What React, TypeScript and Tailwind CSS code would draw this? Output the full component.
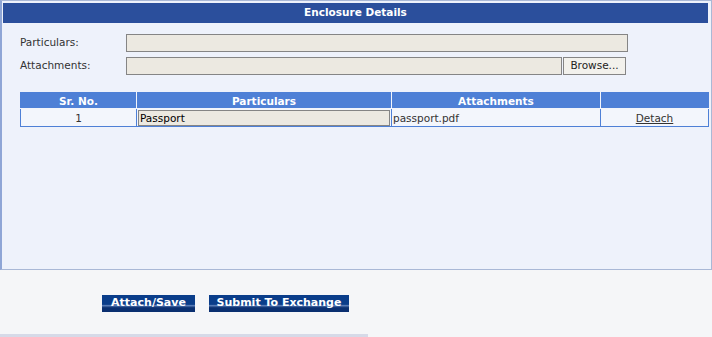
export default function App() {
  const font = { fontFamily: '"DejaVu Sans", Verdana, sans-serif' };
  return (
    <div className="w-[712px] h-[337px] bg-[#f5f6f8] relative overflow-hidden text-[#333]" style={font}>
      <div className="h-[270px] border border-[#a9b8d6] border-l-2 border-l-[#8fa6d6] bg-[#eef2fb] pt-[2px] pl-[1px] pr-[3px]">
        <div className="h-[20px] bg-[#2b4f9c] flex items-center justify-center text-white font-bold text-[10.5px]">
          Enclosure Details
        </div>
        <div className="pl-[17px] pt-[11px]">
          <div className="flex items-center h-[18px]">
            <div className="w-[106px] text-[10.5px]">Particulars:</div>
            <div className="w-[502px] h-[18px] bg-[#ece9e1] border border-[#858585]" />
          </div>
          <div className="flex items-center h-[18px] mt-[5px]">
            <div className="w-[106px] text-[10.5px]">Attachments:</div>
            <div className="w-[436px] h-[18px] bg-[#ece9e1] border border-[#858585]" />
            <div className="ml-[1px] w-[63px] h-[18px] bg-[#f2f1ec] border border-[#858585] text-[10.5px] flex items-center justify-center text-[#222]">
              Browse...
            </div>
          </div>
          <table className="mt-[17px] border-collapse w-[689px] text-[10.5px]">
            <thead>
              <tr className="h-[16px] bg-[#4e80d6] text-white font-bold">
                <th className="w-[116px] border border-[#f3f5fb] border-t-[#4e80d6] border-l-[#4e80d6] p-0 font-bold leading-[14px]">Sr. No.</th>
                <th className="w-[255px] border border-[#f3f5fb] border-t-[#4e80d6] p-0 font-bold leading-[14px]">Particulars</th>
                <th className="w-[209px] border border-[#f3f5fb] border-t-[#4e80d6] p-0 font-bold leading-[14px]">Attachments</th>
                <th className="border border-[#f3f5fb] border-t-[#4e80d6] border-r-[#4e80d6] p-0"></th>
              </tr>
            </thead>
            <tbody>
              <tr className="h-[18px] bg-[#f3f6fc]">
                <td className="border border-[#4e80d6] text-center p-0 text-[#333] leading-[16px]">1</td>
                <td className="border border-[#4e80d6] p-0">
                  <div className="h-[16px] mx-[1px] bg-[#ece9e1] border border-[#858585] text-black text-[10.5px] leading-[14px] pl-[1px]">Passport</div>
                </td>
                <td className="border border-[#4e80d6] p-0 pl-[1px] text-[#333] leading-[16px]">passport.pdf</td>
                <td className="border border-[#4e80d6] p-0 text-center leading-[16px]">
                  <span className="underline text-[#333]">Detach</span>
                </td>
              </tr>
            </tbody>
          </table>
        </div>
      </div>
      <div className="flex gap-[14px] pl-[102px] pt-[25px]">
        <div className="h-[17px] w-[93px] flex items-center justify-center text-white font-bold text-[11px] bg-[linear-gradient(to_bottom,#0a3d8a_0%,#0a3d8a_55%,#5a7db8_62%,#0a2f70_75%,#0a2f70_100%)]">
          Attach/Save
        </div>
        <div className="h-[17px] w-[140px] flex items-center justify-center text-white font-bold text-[11px] bg-[linear-gradient(to_bottom,#0a3d8a_0%,#0a3d8a_55%,#5a7db8_62%,#0a2f70_75%,#0a2f70_100%)]">
          Submit To Exchange
        </div>
      </div>
      <div className="absolute left-0 bottom-0 w-[368px] h-[3px] bg-[#d6dae8]" />
    </div>
  );
}
